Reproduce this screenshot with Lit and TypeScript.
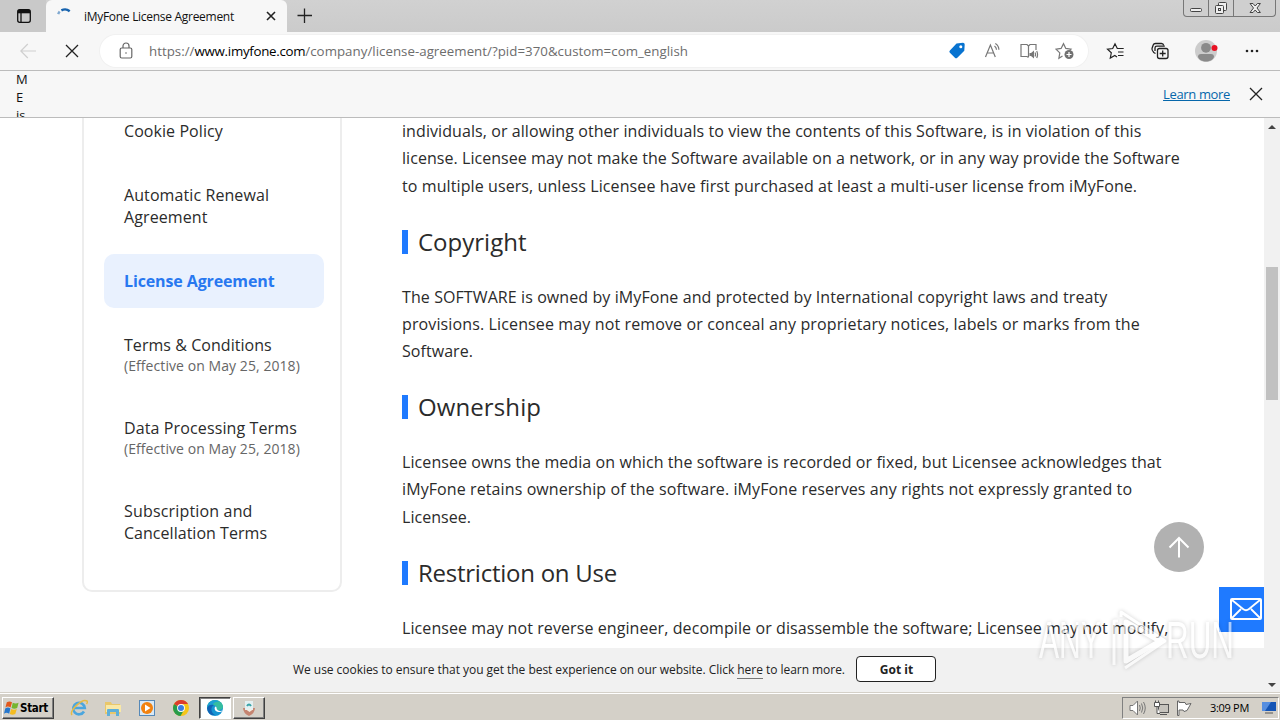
import { LitElement, html, css, svg } from 'lit';
import { customElement, property } from 'lit/decorators.js';

// text with its letter spacing in px
type Line = [text: string, tracking: number];

type NavItem = {
  lines: Line[];
  note?: string;
  active?: boolean;
};

type Section = {
  title?: Line;
  lines: Line[];
};

const navItems: NavItem[] = [
  { lines: [['Cookie Policy', 0.07]] },
  { lines: [['Automatic Renewal', 0.09], ['Agreement', 0.1]] },
  { lines: [['License Agreement', -0.12]], active: true },
  { lines: [['Terms & Conditions', 0.05]], note: '(Effective on May 25, 2018)' },
  { lines: [['Data Processing Terms', 0.12]], note: '(Effective on May 25, 2018)' },
  { lines: [['Subscription and', 0.17], ['Cancellation Terms', 0.03]] },
];

const sections: Section[] = [
  {
    lines: [
      ['individuals, or allowing other individuals to view the contents of this Software, is in violation of this', 0.08],
      ['license. Licensee may not make the Software available on a network, or in any way provide the Software', 0.054],
      ['to multiple users, unless Licensee have first purchased at least a multi-user license from iMyFone.', 0.095],
    ],
  },
  {
    title: ['Copyright', 0],
    lines: [
      ['The SOFTWARE is owned by iMyFone and protected by International copyright laws and treaty', 0.09],
      ['provisions. Licensee may not remove or conceal any proprietary notices, labels or marks from the', 0.127],
      ['Software.', 0.05],
    ],
  },
  {
    title: ['Ownership', 0.1],
    lines: [
      ['Licensee owns the media on which the software is recorded or fixed, but Licensee acknowledges that', 0.085],
      ['iMyFone retains ownership of the software. iMyFone reserves any rights not expressly granted to', 0.1],
      ['Licensee.', 0.05],
    ],
  },
  {
    title: ['Restriction on Use', -0.25],
    lines: [
      ['Licensee may not reverse engineer, decompile or disassemble the software; Licensee may not modify,', 0.085],
    ],
  },
];

const renderLine = ([text, tracking]: Line) => html`<div style="letter-spacing: ${tracking}px">${text}</div>`;

@customElement('browser-chrome')
export class BrowserChrome extends LitElement {
  static styles = css`
    :host {
      display: block;
      font-family: 'Open Sans', 'Noto Sans', sans-serif;
      color: #111;
    }

    svg {
      display: block;
      flex: none;
      fill: none;
    }

    .tabs {
      display: flex;
      height: 32px;
      background: linear-gradient(#d1d1d1, #cbcbcb);
    }

    .tab-menu {
      width: 46px;
      height: 32px;
      padding: 8px 0 0 16px;
      box-sizing: border-box;
      border-bottom-right-radius: 5px;
      background: #c9c9c9;
    }

    .tab {
      display: flex;
      align-items: center;
      box-sizing: border-box;
      width: 241px;
      padding: 0 9px 0 11px;
      background: #f7f7f7;
      border-radius: 6px 6px 0 0;
      font-size: 12px;
    }

    .tab-title {
      flex: 1;
      padding-left: 11px;
      white-space: nowrap;
      letter-spacing: -0.29px;
    }

    .new-tab {
      padding: 8px 0 0 10px;
    }

    .controls {
      display: flex;
      box-sizing: border-box;
      width: 93px;
      height: 17px;
      margin-left: auto;
      margin-right: 4px;
      border: 1px solid #777;
      border-top: 0;
      border-radius: 0 0 4px 4px;
      background: #cfcfcf;
    }

    .controls div {
      display: flex;
      justify-content: center;
      width: 24px;
      border-right: 1px solid #777;
    }

    .controls div:last-child {
      flex: 1;
      border: 0;
    }

    .toolbar {
      display: flex;
      align-items: center;
      box-sizing: border-box;
      height: 39px;
      padding: 0 20px;
      background: #f7f7f7;
      border-bottom: 1px solid #bcbcbc;
    }

    .address {
      display: flex;
      align-items: center;
      box-sizing: border-box;
      width: 988px;
      height: 32px;
      margin-left: 20px;
      padding: 0 13px 0 17px;
      border-radius: 16px;
      background: white;
      box-shadow: 0 0 0 1px #f1f1f1;
      color: #6d6d6d;
      font-size: 13.3px;
    }

    .url {
      flex: 1;
      padding-left: 14px;
      white-space: nowrap;
      letter-spacing: 0.02px;
    }

    .url b {
      font-weight: 400;
      letter-spacing: -0.28px;
      color: #000;
    }

    .address-tools {
      display: flex;
      gap: 16px;
    }

    .tools {
      display: flex;
      align-items: center;
      gap: 24px;
      margin-left: auto;
    }

    .notice {
      display: flex;
      justify-content: space-between;
      box-sizing: border-box;
      height: 47px;
      padding: 0 16px;
      overflow: hidden;
      background: #f7f7f7;
      border-bottom: 1px solid #bcbcbc;
      font-size: 13px;
    }

    .message {
      width: 14px;
      margin-top: -1px;
      line-height: 18px;
    }

    .notice-end {
      display: flex;
      align-items: center;
      gap: 18px;
    }

    a {
      padding-bottom: 1px;
      color: #0667ab;
      font-size: 13px;
      letter-spacing: -0.35px;
      text-decoration: underline;
    }
  `;

  render() {
    return html`
      <div class="tabs">
        <div class="tab-menu">
          <svg width="16" height="16" viewBox="0 0 16 16" stroke="#111" stroke-width="1.3">
            <rect x="1.7" y="1.7" width="12.6" height="12.6" rx="2" />
            <path d="M2 3.6h12" stroke-width="3.4" /><path d="M5 5v9" />
          </svg>
        </div>
        <div class="tab">
          <svg width="16" height="16" viewBox="0 0 16 16" stroke="#1763ae" stroke-width="2.4">
            <path d="M1.2 6.2a8 8 0 0 1 1.5-2.7" stroke="#1763ae88" />
            <path d="M4.4 2.4A7.5 7.5 0 0 1 12.7 3.2" />
          </svg>
          <span class="tab-title">iMyFone License Agreement</span>
          <svg width="14" height="14" viewBox="0 0 14 14" stroke="#222" stroke-width="1.6">
            <path d="m3 3 8 8m0-8-8 8" />
          </svg>
        </div>
        <div class="new-tab">
          <svg width="16" height="16" viewBox="0 0 16 16" stroke="#222" stroke-width="1.3">
            <path d="M.5 7.5h14.500M7.500.5v14.500" />
          </svg>
        </div>
        <div class="controls">
          <div>
            <svg width="24" height="16" stroke="#444">
              <rect x="6.500" y="8.500" width="11" height="3" rx="1" fill="#eee" />
            </svg>
          </div>
          <div>
            <svg width="24" height="16" stroke="#444" fill="#eee">
              <rect x="9.500" y="2.500" width="8" height="8" rx="1" fill="#eee" />
              <rect x="6.500" y="5.500" width="8" height="8" rx="1" fill="#eee" />
              <rect x="9.500" y="8.500" width="2" height="2" />
            </svg>
          </div>
          <div>
            <svg width="24" height="16">
              <path d="M7 3.500h3l2.200 2.500 2.200-2.500h3L14 8l3.400 4.500h-3L12.200 10 10 12.500H7L10.500 8z" fill="#eee" stroke="#444" />
            </svg>
          </div>
        </div>
      </div>

      <div class="toolbar">
        <svg width="16" height="16" viewBox="0 0 16 16" stroke="#cfcfcf" stroke-width="1.2">
          <path d="M16 8H.8m7-7L.8 8l7 7" />
        </svg>
        <svg width="44" height="16" viewBox="0 0 44 16" stroke="#222" stroke-width="1.3">
          <path d="m30 2 12 12m0-12L30 14" />
        </svg>
        <div class="address">
          <svg width="18" height="18" viewBox="0 0 18 18" stroke="#666" stroke-width="1.2">
            <rect x="3.200" y="6" width="11.600" height="10" rx="1.500" />
            <path d="M6 6V4a3 3 0 0 1 6 0v2" />
            <circle cx="9" cy="11" r=".8" fill="#666" stroke="none" />
          </svg>
          <span class="url">https://<b>www.imyfone.com</b>/company/license-agreement/?pid=370&amp;custom=com_english</span>
          <div class="address-tools">
            <svg width="20" height="20" viewBox="0 0 20 20">
              <path d="M9.500 2.600 16 1.800q1.700 0 1.700 1.700l-.4 6.200-7 7q-1.200 1-2.400 0l-5-4.900q-1.200-1.200 0-2.400z" fill="#0873d0" />
              <circle cx="13.800" cy="5.800" r="1.500" fill="#fff" />
            </svg>
            <svg width="20" height="20" viewBox="0 0 20 20" stroke="#777" stroke-width="1.200">
              <path d="m2.500 16 4.900-12 4.900 12M4.200 12h6.400M11.500 5q2 1.500 2 3.800M12.300 2.500q3.600 2.200 3.600 6.300" />
            </svg>
            <svg width="20" height="20" viewBox="0 0 20 20" stroke="#777" stroke-width="1.200">
              <path d="M9.500 16V5L8 3.500H2v12h6l1.500 1M9.500 5 11 3.500h6V9" />
              <path d="M10.500 12h1.500l3-2.500v8L12 15h-1.500z" fill="#777" stroke="none" />
              <path d="M16 11.500q1 2 0 4M17.700 10q1.700 3.500 0 7" />
            </svg>
            <svg width="20" height="20" viewBox="0 0 20 20" stroke="#777" stroke-width="1.200">
              <path d="m7.500 15-3.600 2.200.9-5.300L1 8.200l5.100-.8L8.500 2.700l2.300 4.700 5.200.8-1.200 1.200" />
              <circle cx="14" cy="13.500" r="4.500" fill="#707070" stroke="none" />
              <path d="M14 11v5M11.500 13.500h5" stroke="#fff" />
            </svg>
          </div>
        </div>
        <div class="tools">
          <svg width="20" height="20" viewBox="0 0 20 20" stroke="#222" stroke-width="1.200">
            <path d="M11 16 8.800 14.500 4.300 17l1-5.200L1.500 8.200l5.200-.7L9 2.800l2.300 4.700h6.400M12 11h5.500M12 14.500h5.500" />
          </svg>
          <svg width="20" height="20" viewBox="0 0 20 20" stroke="#222" stroke-width="1.300">
            <path d="M5.500 12.500 3.800 11.500Q1.500 9 2 7.500L3.200 4Q3.700 2.500 5.500 2.500h6q1.800 0 2.200 2" />
            <path d="M5 10V7q0-1.800 1.800-1.800h8" />
            <rect x="7.500" y="7.500" width="10.500" height="10" rx="2" /><path d="M12.700 9.500v6M9.700 12.500h6" />
          </svg>
          <svg width="26" height="24" viewBox="0 0 26 24">
            <circle cx="12" cy="12" r="11" fill="#ccc" />
            <circle cx="12" cy="8.800" r="4.900" fill="#8a8a8a" />
            <path d="M4 18q0-3 3-3h10q3 0 3 3c-2 6-14 6-16 0z" fill="#8a8a8a" />
            <circle cx="20.500" cy="9" r="3" fill="#e81123" />
          </svg>
          <svg width="16" height="16" viewBox="0 0 16 16">
            <g fill="#222">
              <circle cx="3" cy="8" r="1.300" />
              <circle cx="8" cy="8" r="1.300" />
              <circle cx="13" cy="8" r="1.300" />
            </g>
          </svg>
        </div>
      </div>

      <div class="notice">
        <div class="message">M E is</div>
        <div class="notice-end">
          <a>Learn more</a>
          <svg width="16" height="16" viewBox="0 0 16 16" stroke="#222" stroke-width="1.300">
            <path d="m2 2 12 12m0-12L2 14" />
          </svg>
        </div>
      </div>
    `;
  }
}

@customElement('license-nav')
export class LicenseNav extends LitElement {
  @property({ type: Array, attribute: false })
  items: NavItem[] = [];

  static styles = css`
    :host {
      display: block;
    }

    nav {
      display: flex;
      flex-direction: column;
      gap: 10px;
      box-sizing: border-box;
      width: 260px;
      height: 520px;
      padding: 30px 16px 30px 20px;
      border: 2px solid #ededed;
      border-radius: 10px;
    }

    .item {
      padding: 16px 20px;
      border-radius: 10px;
      font-size: 16px;
      line-height: 22px;
      white-space: nowrap;
      color: #2b2b2b;
    }

    .active {
      background: #e9f1fe;
      color: #2878f0;
      font-weight: 700;
    }

    .note {
      font-size: 14px;
      line-height: 19px;
      letter-spacing: 0.07px;
      color: #666;
    }
  `;

  render() {
    return html`
      <nav>
        ${this.items.map(
          (item) => html`
            <div class="item ${item.active ? 'active' : ''}">
              ${item.lines.map(renderLine)}
              ${item.note ? html`<div class="note">${item.note}</div>` : ''}
            </div>
          `
        )}
      </nav>
    `;
  }
}

@customElement('task-bar')
export class TaskBar extends LitElement {
  static styles = css`
    :host {
      display: flex;
      align-items: center;
      box-sizing: border-box;
      height: 28px;
      padding: 2px 0 0 2px;
      background: #d4d0c8;
      border-top: 1px solid #d4d0c8;
      box-shadow: inset 0 1px white;
      font-family: 'DejaVu Sans Condensed', 'DejaVu Sans', sans-serif;
      font-size: 11px;
      color: #000;
    }

    svg {
      display: block;
      flex: none;
    }

    .start,
    .task {
      display: flex;
      align-items: center;
      box-sizing: border-box;
      height: 22px;
      border: 1px solid;
      border-color: #fff #404040 #404040 #fff;
      box-shadow: inset -1px -1px #808080;
    }

    .start {
      width: 52px;
      padding-left: 1px;
      font-weight: 700;
      font-size: 11.5px;
      letter-spacing: -0.3px;
    }

    .quick {
      display: flex;
      gap: 16px;
      margin: 0 9px 0 16px;
    }

    .task {
      justify-content: center;
      width: 32px;
      margin-right: 2px;
    }

    .pressed {
      background: white;
      border-color: #404040 #fff #fff #404040;
      box-shadow: inset 1px 1px #808080;
    }

    .tray {
      display: flex;
      align-items: center;
      gap: 6px;
      box-sizing: border-box;
      width: 157px;
      height: 22px;
      margin-left: auto;
      margin-right: 1px;
      padding-left: 6px;
      border: 1px solid;
      border-color: #808080 #fff #fff #808080;
    }

    .clock {
      width: 39px;
      margin: 0 6px 0 11px;
      white-space: nowrap;
      font-family: 'Open Sans', sans-serif;
      letter-spacing: -0.3px;
    }
  `;

  private edgeIcon() {
    return svg`
      <circle cx="9" cy="9" r="8" fill="#1694d2" />
      <path d="M1 9C1.500-.8 15-1.200 17 7c.5 4-4 5-7 3.500 1.500-2 0-4.500-3-4.500-3 0-5 1.500-6 3z" fill="#35bda0" />
      <path d="M1 9C1.500 2 9-1 13.500 3 10 2 7 4 7 6 4 6 2 7 1 9z" fill="#1b9fd6" />
      <path d="M1 9c1-3 4-4 7-3-4 2-3 8 1 10q-7 1-8-7z" fill="#1264b4" />
      <path d="M9 8q1-1 1.500.5c0 3 3 4 6.500 3-1 1-3 1.500-4.500 1.500C9 12.500 8 10 9 8z" fill="#fff" />
    `;
  }

  render() {
    return html`
      <div class="start">
        <svg width="16" height="16" viewBox="0 0 17 16">
          <path d="M3 2q3-2 5.500 0L7 7.500q-3-2-5.500 0z" fill="#e2581c" />
          <path d="M9.300 2.500q3 1.500 6.200 0L14 8q-3 1.500-6 0z" fill="#75b52e" />
          <path d="M1.300 8.500q3-2 5.500 0L5.500 14q-3-2-5.500 0z" fill="#2677cd" />
          <path d="M7.600 9q3 1.500 6 0L12 14.500q-3 1.500-5.800 0z" fill="#f4bc20" />
        </svg>
        Start
      </div>
      <div class="quick">
        <svg width="18" height="18" viewBox="0 0 18 18" fill="none">
          <path d="M14 12.500A5.800 5.800 0 1 1 14.800 9H4" stroke="#4ba6de" stroke-width="2.600" />
          <path d="M2 16C-1 12 12-1 17 2q1 1-.5 3" stroke="#e6bb45" stroke-width="1.500" />
        </svg>
        <svg width="18" height="18" viewBox="0 0 18 18">
          <path d="M1 3h6l1 2h8v10H1z" fill="#e9c76b" /><path d="M2 6h15v7H2z" fill="#f9e8a6" />
          <path d="M3 17v-6q0-1 1-1h10q1 0 1 1v6h-3v-4H6v4z" fill="#5fafd8" />
        </svg>
        <svg width="18" height="18" viewBox="0 0 18 18">
          <rect x="1.500" y="1.500" width="15" height="15" fill="#d9e9f6" stroke="#5689b8" />
          <circle cx="9" cy="9" r="6" fill="#f2820f" /><path d="m7 5.500 5.500 3.500L7 12.500z" fill="#fff" />
        </svg>
        <svg width="18" height="18" viewBox="0 0 18 18">
          <circle cx="9" cy="9" r="8" fill="#f5c518" />
          <path d="M9 9 2.100 5A8 8 0 0 0 8.500 17L12 11z" fill="#289b4b" />
          <path d="M2.100 5A8 8 0 0 1 16 5H9v4z" fill="#dc3b2d" />
          <circle cx="9" cy="9" r="3.900" fill="#fff" /><circle cx="9" cy="9" r="3" fill="#3b7de0" />
        </svg>
      </div>
      <div class="task pressed"><svg width="18" height="18" viewBox="0 0 18 18">${this.edgeIcon()}</svg></div>
      <div class="task">
        <svg width="18" height="18" viewBox="0 0 18 18">
          <path d="M3 9h12q0 5-6 8-6-3-6-8z" fill="#c58470" />
          <path d="M5 2h8v9H5z" fill="#e4f0f2" /><path d="M7 7q2-3 4 0" stroke="#38a3a8" stroke-width="2" fill="none" />
          <path d="M6 10.500h7L9.500 13z" fill="#f3eee5" />
        </svg>
      </div>
      <div class="tray">
        <svg width="18" height="16" viewBox="0 0 18 16" fill="none" stroke="#777">
          <path d="M1 5.500h3L8.500 1v14L4 10.500H1z" fill="#fff" />
          <path d="M10.500 5q1.500 3 0 6M12.500 3.500q2.500 4.500 0 9M14.500 2q3.500 6 0 12" />
        </svg>
        <svg width="17" height="16" viewBox="0 0 17 16" fill="none" stroke="#555">
          <rect x="5.500" y="4.500" width="10" height="8" fill="#c6c3bd" />
          <path d="M1.500 2.500h5v4h-5zM2.500.5v2M5.500.5v2M4 6.500v7h3M7 14.500h7" fill="#fff" />
        </svg>
        <svg width="17" height="16" viewBox="0 0 17 16" fill="#fff" stroke="#666">
          <path d="M1.500 1v14.500h1.500V10h4l1 1.500 3-1L15 3.500l-5 1-1-2H3V1z" />
        </svg>
        <span class="clock">3:09 PM</span>
        <svg width="16" height="14" viewBox="0 0 16 14">
          <path d="M1 1h14v9H1z" fill="#1555b5" /><path d="M1 1h9L4 10H1z" fill="#568ee0" />
          <path d="M4 12h8" stroke="#555" />
        </svg>
      </div>
    `;
  }
}

@customElement('app-root')
export class AppRoot extends LitElement {
  static styles = css`
    :host {
      position: relative;
      display: flex;
      flex-direction: column;
      width: 1280px;
      height: 720px;
      overflow: hidden;
      background: white;
      font-family: 'Open Sans', 'Noto Sans', sans-serif;
      color: #2b2b2b;
    }

    .viewport {
      display: flex;
      height: 574px;
    }

    .page {
      display: flex;
      flex-direction: column;
      width: 1264px;
    }

    .content {
      display: flex;
      align-items: flex-end;
      height: 530px;
      gap: 60px;
      padding-left: 82px;
      overflow: hidden;
    }

    license-nav {
      flex: none;
      margin-bottom: 56px;
    }

    article {
      align-self: flex-start;
      padding-top: 0.2px;
    }

    .lines {
      font-size: 16px;
      line-height: 27.2px;
      white-space: nowrap;
    }

    h2 {
      display: flex;
      align-items: center;
      gap: 10px;
      height: 83.9px;
      margin: 0;
      font-size: 24px;
      font-weight: 400;
      line-height: 34px;
    }

    h2::before {
      content: '';
      width: 6px;
      height: 24px;
      background: #1f7aff;
    }

    .cookies {
      display: flex;
      align-items: center;
      box-sizing: border-box;
      height: 44px;
      padding: 0 0 2px 293px;
      background: #f1f1f1;
      font-size: 12px;
      color: #222;
      white-space: nowrap;
    }

    .cookies span {
      width: 563px;
      padding-top: 1px;
      letter-spacing: -0.04px;
    }

    .cookies u {
      text-decoration: none;
      border-bottom: 1px solid #777;
    }

    .cookies button {
      width: 80px;
      height: 26px;
      padding: 0 0 0 1px;
      border: 1px solid #222;
      border-radius: 4px;
      background: white;
      font: 700 12px 'Open Sans', sans-serif;
      color: #222;
    }

    .scrollbar {
      display: flex;
      flex-direction: column;
      align-items: center;
      justify-content: space-between;
      width: 16px;
      background: #f1f1f1;
    }

    .thumb {
      width: 12px;
      height: 133px;
      margin-bottom: 143px;
      background: #c1c1c1;
    }

    .to-top {
      position: absolute;
      left: 1154px;
      top: 522px;
    }

    .mail {
      position: absolute;
      left: 1219px;
      top: 587px;
    }

    .watermark {
      position: absolute;
      left: 1036px;
      top: 604px;
      filter: drop-shadow(0 0 2px rgba(0, 0, 0, 0.3));
      font: 51px 'Liberation Sans', sans-serif;
    }
  `;

  render() {
    return html`
      <browser-chrome></browser-chrome>

      <div class="viewport">
        <div class="page">
          <div class="content">
            <license-nav .items=${navItems}></license-nav>
            <article>
              ${sections.map(
                (section) => html`
                  ${section.title ? html`<h2>${renderLine(section.title)}</h2>` : ''}
                  <div class="lines">${section.lines.map(renderLine)}</div>
                `
              )}
            </article>
          </div>
          <div class="cookies">
            <span>
              We use cookies to ensure that you get the best experience on our website. Click <u>here</u> to learn more.
            </span>
            <button>Got it</button>
          </div>
        </div>
        <div class="scrollbar">
          <svg width="16" height="16"><path d="m4 11 4-4 4 4z" fill="#444" /></svg>
          <div class="thumb"></div>
          <svg width="16" height="16"><path d="m4 7 4 4 4-4z" fill="#444" /></svg>
        </div>
      </div>

      <task-bar></task-bar>

      <svg class="to-top" width="50" height="50" viewBox="0 0 50 50" fill="none">
        <circle cx="25" cy="25" r="25" fill="#b1b1b1" />
        <path d="M25 35.500V16M15.500 25.500 25 16l9.500 9.500" stroke="#fff" stroke-width="2" />
      </svg>
      <svg class="mail" width="45" height="45" viewBox="0 0 45 45" fill="none">
        <path d="M0 0h45v45H0z" fill="#1f7aff" />
        <rect x="12" y="12" width="30" height="20" rx="1" stroke="#fff" stroke-width="2" />
        <path d="m13 13 11 9q3 2.500 6 0l11-9M13 31l9-9M41 31l-9-9" stroke="#fff" stroke-width="1.800" />
      </svg>
      <svg class="watermark" width="200" height="72" viewBox="0 0 200 72" fill="none" opacity=".62">
        <g fill="#fff">
          <text x="3" y="54" textLength="62" lengthAdjust="spacingAndGlyphs">ANY</text>
          <text x="130" y="54" textLength="68" lengthAdjust="spacingAndGlyphs">RUN</text>
        </g>
        <g stroke="#fff" stroke-width="5" stroke-linejoin="round">
          <path d="M90 18v39l34-20z" />
          <path d="M78 61V17h4M85 13V8l44 29-40 27" stroke-width="3" />
        </g>
      </svg>
    `;
  }
}
